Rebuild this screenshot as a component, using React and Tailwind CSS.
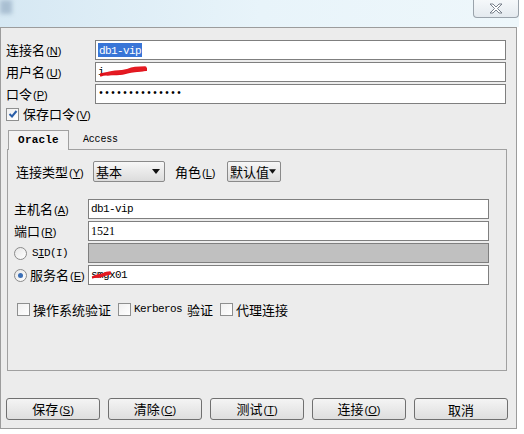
import React from "react";

const cjk = "font-['Noto_Sans_CJK_SC','Noto_Sans',sans-serif]";
const mono = "font-['Liberation_Mono','DejaVu_Sans_Mono',monospace]";

function Key({ k }) {
  return (
    <span className="text-[11px] font-['Liberation_Sans',sans-serif] ml-[1px]">
      (<span className="underline">{k}</span>)
    </span>
  );
}

function Label({ text, k }) {
  return (
    <span className={`text-[13px] leading-none text-black whitespace-nowrap ${cjk}`}>
      {text}
      {k && <Key k={k} />}
    </span>
  );
}

function Field({ children, disabled }) {
  return (
    <div
      className={`h-[20px] border border-[#7f7f7f] flex items-center px-[2px] relative ${
        disabled ? "bg-[#c0c0c0]" : "bg-white"
      }`}
    >
      {children}
    </div>
  );
}

function MonoText({ children }) {
  return (
    <span className={`text-[11px] tracking-[-0.6px] text-black ${mono}`}>{children}</span>
  );
}

// red marker strokes drawn over the hidden parts of a value
function Scribble({ className }) {
  return (
    <svg className={`absolute ${className}`} viewBox="0 0 50 10" preserveAspectRatio="none">
      <path
        d="M1 8 C10 6 18 8 26 6 S40 4 49 3"
        stroke="#e0101a"
        strokeWidth="3"
        fill="none"
        strokeLinecap="round"
      />
      <path
        d="M8 7 C16 5 24 6 30 4 S42 2 48 2 M20 6 C28 4 36 3 46 3"
        stroke="#e41a22"
        strokeWidth="3.4"
        fill="none"
        strokeLinecap="round"
      />
    </svg>
  );
}

function CheckBox({ checked }) {
  return (
    <span className="w-[13px] h-[13px] border border-[#8e8f8f] bg-gradient-to-br from-[#f0f0f0] to-white flex items-center justify-center shrink-0">
      {checked && (
        <svg width="10" height="10" viewBox="0 0 10 10">
          <path d="M1.5 5 L4 7.5 L8.5 2" stroke="#2a5ea8" strokeWidth="2" fill="none" />
        </svg>
      )}
    </span>
  );
}

function Radio({ checked }) {
  return (
    <span className="w-[13px] h-[13px] rounded-full border border-[#8a8a8a] bg-gradient-to-br from-[#e6e6e6] to-white flex items-center justify-center shrink-0">
      {checked && <span className="w-[5px] h-[5px] rounded-full bg-[#3b6fb6]" />}
    </span>
  );
}

function Select({ value, width }) {
  return (
    <div
      className={`${width} h-[21px] border border-[#8a8a8a] rounded-[2px] bg-gradient-to-b from-[#f7f7f7] to-[#dcdcdc] flex items-center justify-between pl-[2px] pr-[4px]`}
    >
      <Label text={value} />
      <svg width="8" height="5" viewBox="0 0 8 5">
        <path d="M0 0 H8 L4 5 Z" fill="#111" />
      </svg>
    </div>
  );
}

function Button({ text, k }) {
  return (
    <button className="w-[94px] h-[22px] border border-[#707070] rounded-[3px] bg-gradient-to-b from-[#f4f4f4] to-[#dedede] flex items-center justify-center">
      <Label text={text} k={k} />
    </button>
  );
}

export default function App() {
  return (
    <div className="w-[524px] h-[434px] bg-white overflow-hidden relative text-[13px] leading-none">
      {/* title bar */}
      <div className="h-[27px] w-[519px] bg-gradient-to-r from-[#d6e8f3] via-[#e8f4fa] to-[#eef7fb] flex justify-end relative">
        <div className="absolute left-0 top-0 w-[12px] h-[14px] bg-[#a9bfd2] blur-[2px]" />
        <div className="w-[46px] h-[18px] border border-t-0 border-[#9aa3ab] rounded-b-[4px] bg-gradient-to-b from-[#f5f8fa] to-[#e4eaef] flex items-center justify-center">
          <svg width="14" height="11" viewBox="0 0 14 11">
            <path
              d="M1 1 H4 L7 4 L10 1 H13 L8.5 5.5 L13 10 H10 L7 7 L4 10 H1 L5.5 5.5 Z"
              fill="#fff"
              stroke="#6b7480"
              strokeWidth="0.9"
            />
          </svg>
        </div>
      </div>

      {/* dialog body */}
      <div className="w-[517px] h-[402px] border border-[#9c9c9c] bg-[#ececec] flex flex-col">
        <div className="grid grid-cols-[89px_1fr] gap-y-[2px] pl-[5px] pr-[10px] pt-[12px]">
          <div className="flex items-center">
            <Label text="连接名" k="N" />
          </div>
          <Field>
            <span className="bg-[#3875d7] px-[1px]">
              <span className={`text-[11px] tracking-[-0.6px] text-white ${mono}`}>db1-vip</span>
            </span>
          </Field>
          <div className="flex items-center">
            <Label text="用户名" k="U" />
          </div>
          <Field>
            <MonoText>i</MonoText>
            <Scribble className="left-[4px] top-[3px] w-[47px] h-[11px]" />
          </Field>
          <div className="flex items-center">
            <Label text="口令" k="P" />
          </div>
          <Field>
            <span className={`text-[10px] text-black ${mono}`}>••••••••••••••</span>
          </Field>
        </div>

        <div className="h-[20px] flex items-center gap-[4px] pl-[5px]">
          <CheckBox checked />
          <Label text="保存口令" k="V" />
        </div>

        {/* tabs */}
        <div className="mt-[5px] h-[20px] ml-[7px] flex items-end">
          <div className="w-[61px] h-[20px] border-t border-x border-[#a0a0a0] bg-[#f2f2f2] flex items-center justify-center relative z-10 -mb-px">
            <span className={`text-[11px] font-bold tracking-[0.2px] text-black ${mono}`}>Oracle</span>
          </div>
          <div className="h-[18px] pl-[14px] flex items-center">
            <span className={`text-[10px] tracking-[-0.2px] text-black ${mono}`}>Access</span>
          </div>
        </div>

        <div className="ml-[6px] mr-[9px] h-[222px] border border-[#a0a0a0] flex flex-col">
          <div className="pt-[11px] pl-[8px] flex items-center">
            <div className="w-[77px] flex items-center">
              <Label text="连接类型" k="Y" />
            </div>
            <Select value="基本" width="w-[72px]" />
            <div className="w-[52px] ml-[10px] flex items-center">
              <Label text="角色" k="L" />
            </div>
            <Select value="默认值" width="w-[54px]" />
          </div>

          <div className="mt-[17px] grid grid-cols-[74px_1fr] gap-y-[2px] pl-[6px] pr-[17px]">
            <div className="flex items-center">
              <Label text="主机名" k="A" />
            </div>
            <Field>
              <MonoText>db1-vip</MonoText>
            </Field>
            <div className="flex items-center">
              <Label text="端口" k="R" />
            </div>
            <Field>
              <span className="text-[12px] text-black font-['Liberation_Serif',serif]">1521</span>
            </Field>
            <div className="flex items-center gap-[5px]">
              <Radio />
              <span className={`text-[11px] tracking-[-0.6px] text-black ${mono}`}>
                S<span className="underline">I</span>D(I)
              </span>
            </div>
            <Field disabled />
            <div className="flex items-center gap-[3px]">
              <Radio checked />
              <Label text="服务名" k="E" />
            </div>
            <Field>
              <MonoText>smgx01</MonoText>
              <Scribble className="left-[3px] top-[5px] w-[19px] h-[8px]" />
            </Field>
          </div>

          <div className="mt-[18px] pl-[9px] flex items-center">
            <CheckBox />
            <span className="ml-[3px] flex items-center">
              <Label text="操作系统验证" />
            </span>
            <span className="ml-[7px] flex items-center">
              <CheckBox />
            </span>
            <span className={`ml-[3px] text-[11px] tracking-[-0.6px] text-black ${mono}`}>Kerberos</span>
            <span className="ml-[5px] flex items-center">
              <Label text="验证" />
            </span>
            <span className="ml-[7px] flex items-center">
              <CheckBox />
            </span>
            <span className="ml-[3px] flex items-center">
              <Label text="代理连接" />
            </span>
          </div>
        </div>

        <div className="mt-[27px] pl-[5px] flex gap-[8px]">
          <Button text="保存" k="S" />
          <Button text="清除" k="C" />
          <Button text="测试" k="T" />
          <Button text="连接" k="O" />
          <Button text="取消" />
        </div>
      </div>
    </div>
  );
}
